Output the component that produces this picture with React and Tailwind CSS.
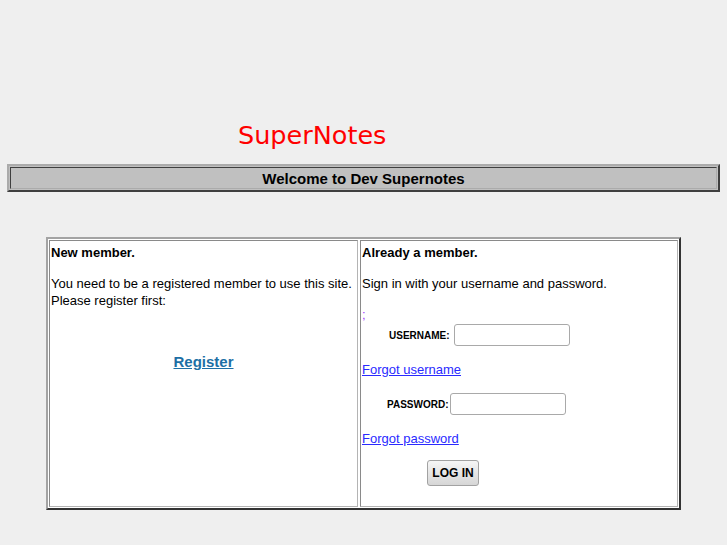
export default function App() {
  return (
    <div className="min-h-screen bg-[#efefef] font-['Liberation_Sans',Arial,sans-serif] text-[13px] text-black">
      {/* Title */}
      <div className="pt-[120px] pl-[238px]">
        <div className="font-['DejaVu_Sans',sans-serif] text-[25.5px] leading-[30px] text-[#ff0000]">SuperNotes</div>
      </div>

      {/* Welcome bar */}
      <div className="mx-auto mt-[14px] w-[713px] border-2 border-t-[#ababab] border-l-[#ababab] border-b-[#3f3f3f] border-r-[#3f3f3f] bg-[#c0c0c0] p-px">
        <div className="flex h-[22px] items-center justify-center border border-t-[#3f3f3f] border-l-[#3f3f3f] border-b-[#ababab] border-r-[#ababab] text-[15px] font-bold leading-[17px]">
          Welcome to Dev Supernotes
        </div>
      </div>

      {/* Login table */}
      <div className="mx-auto mt-[45px] flex h-[273px] w-[635px] gap-[2px] border-2 border-t-[#a3a3a3] border-l-[#a3a3a3] border-b-[#333333] border-r-[#333333] bg-white p-px">
        {/* New member */}
        <div className="flex w-[309px] flex-col border border-t-[#8a8a8a] border-l-[#8a8a8a] border-b-[#b4b4b4] border-r-[#b4b4b4] px-px pt-[3px] leading-[17px]">
          <div className="font-bold">New member.</div>
          <div className="mt-[14px]">You need to be a registered member to use this site.</div>
          <div>Please register first:</div>
          <div className="mt-[44px] text-center">
            <a href="#" className="text-[15px] font-bold text-[#1d6fa5] underline">Register</a>
          </div>
        </div>

        {/* Already a member */}
        <div className="flex flex-1 flex-col border border-t-[#8a8a8a] border-l-[#8a8a8a] border-b-[#b4b4b4] border-r-[#b4b4b4] px-px pt-[3px] leading-[17px]">
          <div className="font-bold">Already a member.</div>
          <div className="mt-[14px]">Sign in with your username and password.</div>
          <div className="mt-[14px] text-[#a040ff]">;</div>

          <div className="mt-px ml-[27px] flex items-center">
            <span className="text-[10px] font-bold">USERNAME:</span>
            <input className="ml-[4px] h-[22px] w-[116px] rounded-[3px] border border-[#a9a9a9] bg-white outline-none" />
          </div>
          <a href="#" className="mt-[15px] self-start text-[#2a2aff] underline">Forgot username</a>

          <div className="mt-[15px] ml-[25px] flex items-center">
            <span className="text-[10px] font-bold">PASSWORD:</span>
            <input type="password" className="ml-[2px] h-[22px] w-[116px] rounded-[3px] border border-[#a9a9a9] bg-white outline-none" />
          </div>
          <a href="#" className="mt-[15px] self-start text-[#2a2aff] underline">Forgot password</a>

          <button className="mt-[13px] ml-[65px] h-[26px] w-[52px] self-start rounded-[3px] border border-[#a2a2a2] bg-gradient-to-b from-[#f6f6f6] to-[#d6d6d6] text-[12px] font-bold leading-none">
            LOG IN
          </button>
        </div>
      </div>
    </div>
  );
}
